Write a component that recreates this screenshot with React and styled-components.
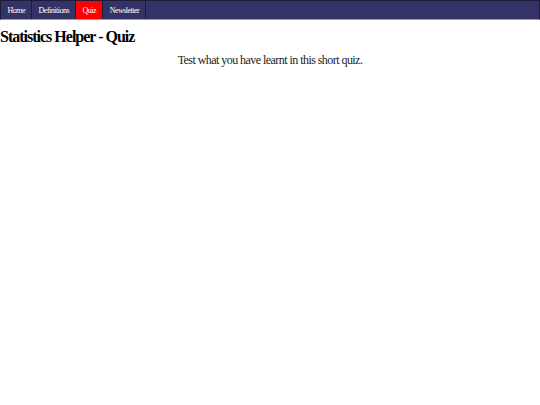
import React from 'react';
import styled, { createGlobalStyle } from 'styled-components';

const Global = createGlobalStyle`
  html, body {
    margin: 0;
    padding: 0;
    background: #fff;
    font-family: "Liberation Serif", "Times New Roman", serif;
  }
`;

const NavBar = styled.ul`
  display: flex;
  margin: 0;
  padding: 0;
  list-style: none;
  height: 20px;
  box-sizing: border-box;
  background: #333366;
  border: 1px solid #1c1c3a;
  border-bottom-color: #9a9ab0;
`;

const NavItem = styled.li`
  display: flex;
  border-right: 1px solid #1c1c3a;
  background: ${p => (p.active ? '#ff0000' : 'transparent')};
`;

const NavLink = styled.a`
  display: flex;
  align-items: center;
  padding: 0 6px 0 6.5px;
  color: #fff;
  font-size: 8px;
  letter-spacing: -0.5px;
  text-decoration: none;
`;

const Title = styled.h1`
  margin: 8px 0 0;
  font-size: 16px;
  letter-spacing: -1px;
  font-weight: bold;
  color: #000;
`;

const Intro = styled.p`
  margin: 7px 0 0;
  text-align: center;
  font-size: 12px;
  letter-spacing: -0.55px;
  color: #222;
`;

const links = ['Home', 'Definitions', 'Quiz', 'Newsletter'];

export default function App() {
  return (
    <>
      <Global />
      <nav>
        <NavBar>
          {links.map(l => (
            <NavItem key={l} active={l === 'Quiz'}>
              <NavLink href="#">{l}</NavLink>
            </NavItem>
          ))}
        </NavBar>
      </nav>
      <Title>Statistics Helper - Quiz</Title>
      <Intro>Test what you have learnt in this short quiz.</Intro>
    </>
  );
}
